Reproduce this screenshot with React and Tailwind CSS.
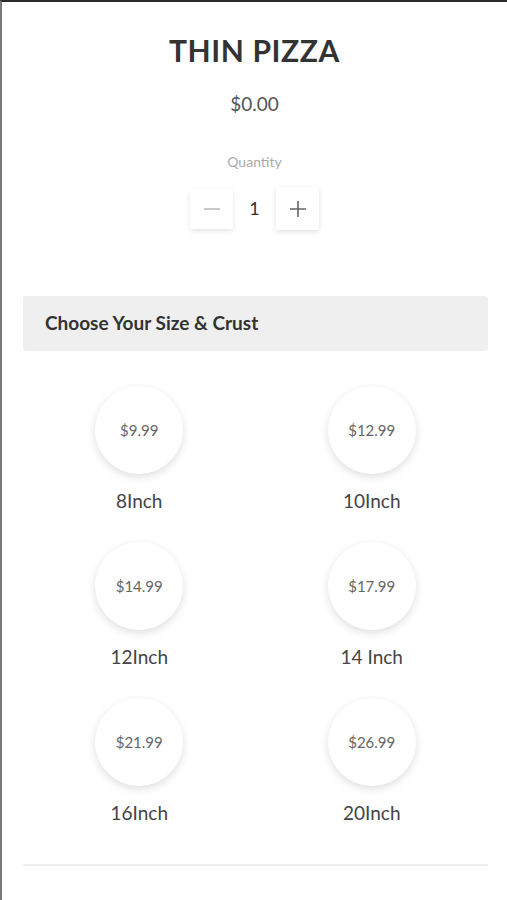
import React from "react";

const sizes = [
  { price: "$9.99", label: "8Inch" },
  { price: "$12.99", label: "10Inch" },
  { price: "$14.99", label: "12Inch" },
  { price: "$17.99", label: "14 Inch" },
  { price: "$21.99", label: "16Inch" },
  { price: "$26.99", label: "20Inch" },
];

export default function App() {
  return (
    <div
      className="w-[507px] h-[900px] bg-white border-t-2 border-l-2 border-t-[#2a2a2a] border-l-[#7a7a7a] overflow-hidden"
      style={{ fontFamily: "Lato, 'Open Sans', sans-serif" }}
    >
      <div className="flex flex-col items-center">
        <h1 className="mt-[30px] text-[30px] leading-[36px] font-bold text-[#333] tracking-[0.6px]">
          THIN PIZZA
        </h1>
        <div className="mt-[24px] text-[19px] leading-[24px] text-[#555]">$0.00</div>
        <div className="mt-[37px] text-[14px] leading-[18px] text-[#aaa]">Quantity</div>
        <div className="mt-[16px] flex items-center">
          <button className="w-[43px] h-[40px] bg-white shadow-[0_2px_5px_rgba(0,0,0,0.10)] rounded-[2px] flex items-center justify-center">
            <svg width="18" height="18" viewBox="0 0 18 18">
              <path d="M1 9h16" stroke="#bbb" strokeWidth="1.6" />
            </svg>
          </button>
          <div className="w-[43px] text-center text-[18px] text-[#333]">1</div>
          <button className="w-[43px] h-[43px] bg-white shadow-[0_2px_5px_rgba(0,0,0,0.12)] rounded-[2px] flex items-center justify-center">
            <svg width="18" height="18" viewBox="0 0 18 18">
              <path d="M1 9h16M9 1v16" stroke="#666" strokeWidth="1.6" />
            </svg>
          </button>
        </div>
      </div>

      <div className="pl-[21px] pr-[19px] mt-[66px]">
        <div className="h-[55px] bg-[#efefef] rounded-[3px] flex items-center px-[22px]">
          <span className="text-[19px] font-bold text-[#333]">Choose Your Size &amp; Crust</span>
        </div>

        <div className="grid grid-cols-2 mt-[35px] gap-y-[29px]">
          {sizes.map((s) => (
            <div key={s.label} className="flex flex-col items-center">
              <div className="w-[88px] h-[88px] rounded-full bg-white shadow-[0_3px_8px_rgba(0,0,0,0.13)] flex items-center justify-center">
                <span className="text-[15px] text-[#666]">{s.price}</span>
              </div>
              <div className="mt-[15px] text-[19px] leading-[24px] text-[#444]">{s.label}</div>
            </div>
          ))}
        </div>

        <div className="mt-[39px] h-[2px] bg-[#eeeeee]" />
      </div>
    </div>
  );
}
